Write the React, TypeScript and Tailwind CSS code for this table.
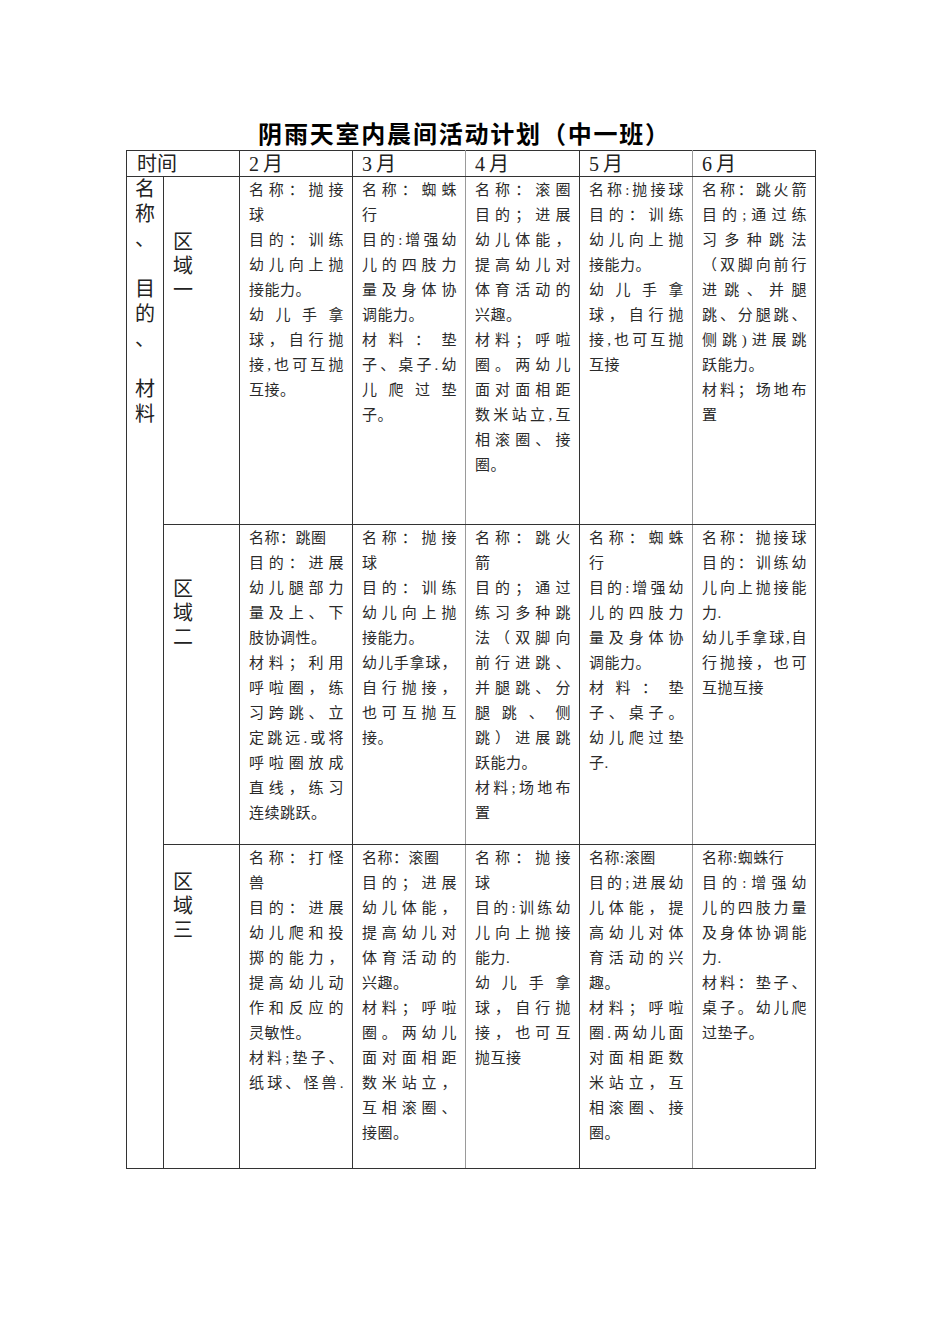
import React from "react";

type Line = [string, boolean]; // text, justify

const J = (t: string): Line => [t, true];
const L = (t: string): Line => [t, false];

const rows: { label: string[]; labelPt: string; h: string; cells: Line[][] }[] = [
  {
    label: ["区", "域", "一"],
    labelPt: "pt-[53px]",
    h: "h-[348px]",
    cells: [
      [J("名称：抛接"), L("球"), J("目的：训练"), J("幼儿向上抛"), L("接能力。"), J("幼儿手拿"), J("球，自行抛"), J("接,也可互抛"), L("互接。")],
      [J("名称：蜘蛛"), L("行"), J("目的:增强幼"), J("儿的四肢力"), J("量及身体协"), L("调能力。"), J("材料：垫"), J("子、桌子.幼"), J("儿爬过垫"), L("子。")],
      [J("名称：滚圈"), J("目的；进展"), J("幼儿体能，"), J("提高幼儿对"), J("体育活动的"), L("兴趣。"), J("材料；呼啦"), J("圈。两幼儿"), J("面对面相距"), J("数米站立,互"), J("相滚圈、接"), L("圈。")],
      [J("名称:抛接球"), J("目的：训练"), J("幼儿向上抛"), L("接能力。"), J("幼儿手拿"), J("球，自行抛"), J("接,也可互抛"), L("互接")],
      [J("名称：跳火箭"), J("目的;通过练"), J("习多种跳法"), J("（双脚向前行"), J("进跳、并腿"), J("跳、分腿跳、"), J("侧跳)进展跳"), L("跃能力。"), J("材料；场地布"), L("置")],
    ],
  },
  {
    label: ["区", "域", "二"],
    labelPt: "pt-[52px]",
    h: "h-[320px]",
    cells: [
      [L("名称：跳圈"), J("目的：进展"), J("幼儿腿部力"), J("量及上、下"), L("肢协调性。"), J("材料；利用"), J("呼啦圈，练"), J("习跨跳、立"), J("定跳远.或将"), J("呼啦圈放成"), J("直线，练习"), L("连续跳跃。")],
      [J("名称：抛接"), L("球"), J("目的：训练"), J("幼儿向上抛"), L("接能力。"), J("幼儿手拿球，"), J("自行抛接，"), J("也可互抛互"), L("接。")],
      [J("名称：跳火"), L("箭"), J("目的；通过"), J("练习多种跳"), J("法（双脚向"), J("前行进跳、"), J("并腿跳、分"), J("腿跳、侧"), J("跳）进展跳"), L("跃能力。"), J("材料;场地布"), L("置")],
      [J("名称：蜘蛛"), L("行"), J("目的:增强幼"), J("儿的四肢力"), J("量及身体协"), L("调能力。"), J("材料：垫"), J("子、桌子。"), J("幼儿爬过垫"), L("子.")],
      [J("名称：抛接球"), J("目的：训练幼"), J("儿向上抛接能"), L("力."), J("幼儿手拿球,自"), J("行抛接，也可"), L("互抛互接")],
    ],
  },
  {
    label: ["区", "域", "三"],
    labelPt: "pt-[25px]",
    h: "h-[324px]",
    cells: [
      [J("名称：打怪"), L("兽"), J("目的：进展"), J("幼儿爬和投"), J("掷的能力，"), J("提高幼儿动"), J("作和反应的"), L("灵敏性。"), J("材料;垫子、"), J("纸球、怪兽.")],
      [L("名称：滚圈"), J("目的；进展"), J("幼儿体能，"), J("提高幼儿对"), J("体育活动的"), L("兴趣。"), J("材料；呼啦"), J("圈。两幼儿"), J("面对面相距"), J("数米站立，"), J("互相滚圈、"), L("接圈。")],
      [J("名称：抛接"), L("球"), J("目的:训练幼"), J("儿向上抛接"), L("能力."), J("幼儿手拿"), J("球，自行抛"), J("接，也可互"), L("抛互接")],
      [L("名称:滚圈"), J("目的;进展幼"), J("儿体能，提"), J("高幼儿对体"), J("育活动的兴"), L("趣。"), J("材料；呼啦"), J("圈.两幼儿面"), J("对面相距数"), J("米站立，互"), J("相滚圈、接"), L("圈。")],
      [L("名称:蜘蛛行"), J("目的:增强幼"), J("儿的四肢力量"), J("及身体协调能"), L("力."), J("材料：垫子、"), J("桌子。幼儿爬"), L("过垫子。")],
    ],
  },
];

const months = ["2", "3", "4", "5", "6"];
const font = { fontFamily: '"Liberation Serif", "Noto Sans CJK SC", serif' };

// right-border colours per month column (3月 and 5月 borders are lighter)
const cellBorder = [
  "border-[#333]",
  "border-[#333] border-r-[#9a9a9a]",
  "border-[#333]",
  "border-[#333] border-r-[#9a9a9a]",
  "border-[#333]",
];

function Cell({ lines, cls }: { lines: Line[]; cls: string }) {
  return (
    <td className={`border ${cls} align-top pl-[9px] pr-[8px] pt-[1px]`}>
      <div className="text-[15px] leading-[25px] text-[#2a2a2a] tracking-[0.5px]">
        {lines.map(([t, j], i) => (
          <div
            key={i}
            className={j ? "text-justify [text-align-last:justify] whitespace-nowrap" : "text-left whitespace-nowrap"}
          >
            {t}
          </div>
        ))}
      </div>
    </td>
  );
}

export default function App() {
  return (
    <div className="w-[950px] min-h-[1344px] bg-white pt-[120px]" style={font}>
      <div className="ml-[126px] w-[689px] pr-[12px] text-center h-[30px] leading-[30px] text-[24px] font-bold text-black tracking-[1.8px]">
        阴雨天室内晨间活动计划（中一班）
      </div>
      <table className="ml-[126px] w-[689px] table-fixed border-collapse border border-[#222]">
        <colgroup>
          <col className="w-[37px]" />
          <col className="w-[76px]" />
          <col className="w-[113px]" />
          <col className="w-[113px]" />
          <col className="w-[114px]" />
          <col className="w-[113px]" />
          <col className="w-[123px]" />
        </colgroup>
        <tbody>
          <tr className="h-[26px]">
            <td colSpan={2} className="border border-[#333] pl-[10px] text-[20px] leading-[24px] text-[#222] align-middle">
              时间
            </td>
            {months.map((m, i) => (
              <td key={m} className={`border ${cellBorder[i]} pl-[9px] text-[20px] leading-[24px] text-[#222] align-middle`}>
                {m}
                <span className="ml-[4px]">月</span>
              </td>
            ))}
          </tr>
          {rows.map((r, ri) => (
            <tr key={ri} className={r.h}>
              {ri === 0 && (
                <td rowSpan={3} className="border border-[#333] align-top text-center text-[20px] leading-[25px] text-[#222] pt-[0px]">
                  {["名", "称", "、", "\u00a0", "目", "的", "、", "\u00a0", "材", "料"].map((c, i) => (
                    <div key={i}>{c}</div>
                  ))}
                </td>
              )}
              <td className={`border border-[#333] align-top pl-[9px] ${r.labelPt} text-[20px] leading-[24px] text-[#222]`}>
                {r.label.map((c, i) => (
                  <div key={i}>{c}</div>
                ))}
              </td>
              {r.cells.map((c, ci) => (
                <Cell key={ci} lines={c} cls={cellBorder[ci]} />
              ))}
            </tr>
          ))}
        </tbody>
      </table>
    </div>
  );
}
